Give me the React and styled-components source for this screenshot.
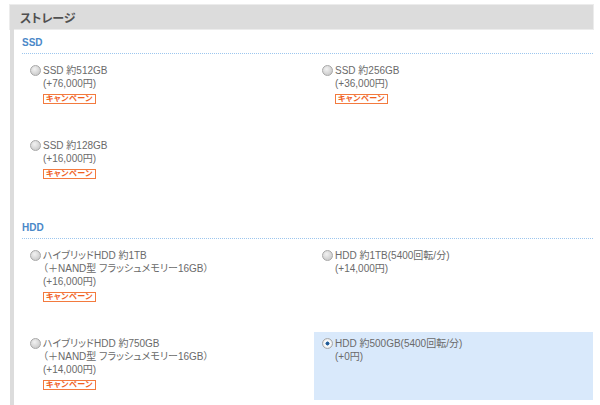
import React from "react";
import styled, { createGlobalStyle } from "styled-components";

const GlobalStyle = createGlobalStyle`
  body {
    margin: 0;
    background: #fff;
    font-family: "Liberation Sans", "Noto Sans CJK JP", sans-serif;
  }
`;

const Wrapper = styled.div`
  width: 583px;
  padding: 5px 0 0 10px;
`;

const Header = styled.div`
  height: 24px;
  display: flex;
  align-items: center;
  padding-left: 10px;
  background: #dcdcdc;
  box-shadow: 0 0 0 1px #ececec;
  font-size: 12px;
  font-weight: bold;
  color: #505050;
  font-feature-settings: "palt";
`;

const Body = styled.div`
  border-left: 4px solid #dcdcdc;
  padding: 0 0 0 8px;
  min-height: 376px;
`;

const Group = styled.section`
  padding-top: 7px;
  & + & {
    margin-top: 25px;
  }
`;

const GroupTitle = styled.h3`
  margin: 0;
  font-size: 10px;
  line-height: 14px;
  font-weight: bold;
  color: #4a88c8;
  padding-bottom: 3px;
  border-bottom: 1px dotted #9cc6ee;
`;

const Options = styled.div`
  display: grid;
  grid-template-columns: 292px 279px;
  row-gap: 20px;
  margin-top: 5px;
`;

const Option = styled.label`
  display: flex;
  align-items: flex-start;
  gap: 2px;
  padding: 5px 8px 10px;
  background: ${({ selected }) => (selected ? "#d9e9fb" : "transparent")};
`;

const Radio = styled.input.attrs({ type: "radio" })`
  appearance: none;
  margin: 1px 0 0;
  width: 11px;
  height: 11px;
  flex: none;
  border-radius: 50%;
  border: 1px solid #a8a8a8;
  box-sizing: border-box;
  background: radial-gradient(circle at 40% 35%, #f2f2f2 0%, #d4d4d4 60%, #c0c0c0 100%);

  &:checked {
    background: radial-gradient(circle at 50% 50%, #1c4f86 0%, #2c6aa8 28%, #ffffff 36%, #f0f0f0 60%, #c8c8c8 100%);
  }
`;

const Text = styled.div`
  font-size: 10px;
  line-height: 13px;
  color: #6a6a6a;
  font-feature-settings: "palt";
`;

const Line = styled.div`
  white-space: nowrap;
`;

const Badge = styled.span`
  display: inline-block;
  margin-top: 4px;
  height: 10px;
  box-sizing: border-box;
  padding: 0 2px;
  border: 1px solid #f37a3e;
  background: #fff;
  color: #f0601e;
  font-size: 8px;
  line-height: 8px;
  font-weight: bold;
  letter-spacing: 0.5px;
  vertical-align: top;
`;

const groups = [
  {
    title: "SSD",
    options: [
      { lines: ["SSD 約512GB"], price: "(+76,000円)", campaign: true },
      { lines: ["SSD 約256GB"], price: "(+36,000円)", campaign: true },
      { lines: ["SSD 約128GB"], price: "(+16,000円)", campaign: true },
    ],
  },
  {
    title: "HDD",
    options: [
      {
        lines: ["ハイブリッドHDD 約1TB", "（＋NAND型 フラッシュメモリー16GB）"],
        price: "(+16,000円)",
        campaign: true,
      },
      { lines: ["HDD 約1TB(5400回転/分)"], price: "(+14,000円)" },
      {
        lines: ["ハイブリッドHDD 約750GB", "（＋NAND型 フラッシュメモリー16GB）"],
        price: "(+14,000円)",
        campaign: true,
      },
      { lines: ["HDD 約500GB(5400回転/分)"], price: "(+0円)", selected: true },
    ],
  },
];

export default function App() {
  return (
    <Wrapper>
      <GlobalStyle />
      <Header>ストレージ</Header>
      <Body>
        {groups.map((group) => (
          <Group key={group.title}>
            <GroupTitle>{group.title}</GroupTitle>
            <Options>
              {group.options.map((opt, i) => (
                <Option key={i} selected={opt.selected}>
                  <Radio name="storage" defaultChecked={!!opt.selected} />
                  <Text>
                    {opt.lines.map((l) => (
                      <Line key={l}>{l}</Line>
                    ))}
                    <Line>{opt.price}</Line>
                    {opt.campaign && <Badge>キャンペーン</Badge>}
                  </Text>
                </Option>
              ))}
            </Options>
          </Group>
        ))}
      </Body>
    </Wrapper>
  );
}
